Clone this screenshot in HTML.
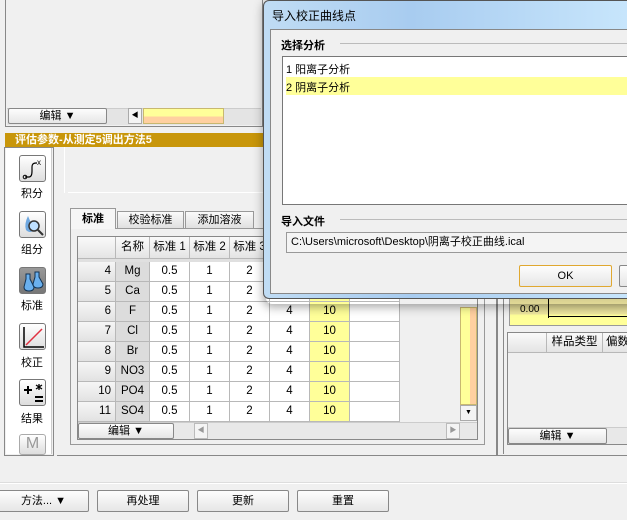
<!DOCTYPE html>
<html><head><meta charset="utf-8">
<style>
*{margin:0;padding:0;box-sizing:border-box}
body{width:627px;height:520px;overflow:hidden;background:#f0f0f0;position:relative;font-family:"Liberation Sans","Noto Sans CJK SC",sans-serif;font-size:11px;color:#000}
.a{position:absolute}
.btn{position:absolute;background:linear-gradient(#fdfdfd,#e6e6e6);border:1px solid #888;border-radius:2px;text-align:center;font-size:11px}
.cell{position:absolute;height:20px;line-height:19px;text-align:center;border-right:1px solid #b8b8b8;border-bottom:1px solid #b8b8b8;background:#fff;font-size:11.5px}
.hd{background:linear-gradient(#fafafa,#e4e4e4)}
.rn{background:linear-gradient(#f6f6f6,#e2e2e2);text-align:right;padding-right:4px}
.nm{background:#dcdcdc}
.yl{background:#ffff99}
.ic{position:absolute;left:19px;width:27px;height:27px;border:1px solid #777;border-radius:3px;background:linear-gradient(#fff,#ddd)}
.lb{position:absolute;left:12px;width:40px;text-align:center;font-size:11px}
</style></head><body>
<div class="a" style="left:5px;top:0;width:258px;height:127px;border:1px solid #888;border-top:none"></div>
<div class="a" style="left:7px;top:108px;width:254px;height:17px;background:#e4e4e4;border-top:1px solid #ccc"></div>
<div class="btn" style="left:8px;top:108px;width:99px;height:16px;line-height:14px">编辑 ▼</div>
<div class="a" style="left:128px;top:108px;width:14px;height:16px;border:1px solid #aaa;background:#f4f4f4;font-size:7px;line-height:14px;text-align:center">◀</div>
<div class="a" style="left:143px;top:108px;width:81px;height:16px;border:1px solid #c8b870;background:linear-gradient(#ffff99 0,#ffff99 55%,#ffd0a0 55%)"></div>
<div class="a" style="left:5px;top:133px;width:260px;height:14px;background:#c8960a;color:#fff;font-weight:bold;font-size:11px;line-height:14px;padding-left:10px">评估参数-从测定5调出方法5</div>
<div class="a" style="left:4px;top:147px;width:50px;height:309px;border:1px solid #888;background:#f0f0f0"></div>
<div class="a" style="left:6px;top:148px;width:46px;height:306px;background:#fff;border-right:1px solid #ccc"></div>
<div class="ic" style="top:155px;font-size:9px"><svg width="27" height="27"><path d="M5 21h4q3 0 3-6v-4q0-4 4-4h1" stroke="#000" fill="none" stroke-width="1.2"/><circle cx="5" cy="21" r="1.8" fill="none" stroke="#000"/><text x="17" y="9" font-size="8" font-family="Liberation Sans">x</text></svg></div>
<div class="lb" style="top:185px">积分</div>
<div class="ic" style="top:211px"><svg width="27" height="27"><path d="M8 4q-4 8 -2 14q4 4 8 0z" fill="#6fa8e0"/><circle cx="14" cy="14" r="5" fill="#bfe0ff" stroke="#333" stroke-width="1.5"/><path d="M18 18l5 5" stroke="#333" stroke-width="2"/></svg></div>
<div class="lb" style="top:241px">组分</div>
<div class="ic" style="top:267px;background:linear-gradient(#999,#777)"><svg width="27" height="27"><path d="M6 6h4v5l4 8q0 4-5 4t-5-4l2-8z" fill="#6ab0ee" stroke="#135"/><path d="M15 4h4v5l4 7q0 4-5 4t-5-4l2-7z" fill="#6ab0ee" stroke="#135"/></svg></div>
<div class="lb" style="top:297px">标准</div>
<div class="ic" style="top:323px"><svg width="27" height="27"><path d="M4 3v20h20" stroke="#000" stroke-width="1.5" fill="none"/><path d="M6 21l16-16" stroke="#e03040" stroke-width="1.5"/></svg></div>
<div class="lb" style="top:354px">校正</div>
<div class="ic" style="top:379px"><svg width="27" height="27"><path d="M4 10h8M8 6v8" stroke="#000" stroke-width="2"/><path d="M15 17h8M15 21h8" stroke="#000" stroke-width="2"/><path d="M19 4v6M16 5l6 4M22 5l-6 4" stroke="#000" stroke-width="1.3"/></svg></div>
<div class="lb" style="top:410px">结果</div>
<div class="ic" style="top:434px;height:21px;border-color:#aaa;color:#999;font-size:16px;text-align:center">M</div>
<div class="a" style="left:57px;top:147px;width:440px;height:309px;border-right:1px solid #888;border-bottom:1px solid #888"></div>
<div class="a" style="left:64px;top:147px;width:1px;height:46px;background:#fff"></div>
<div class="a" style="left:68px;top:192px;width:428px;height:1px;background:#aaa;border-bottom:1px solid #fff"></div>
<div class="a" style="left:70px;top:208px;width:46px;height:21px;background:#f6f6f6;border:1px solid #999;border-bottom:none;font-weight:bold;text-align:center;line-height:20px;z-index:2">标准</div>
<div class="a" style="left:117px;top:211px;width:67px;height:18px;background:linear-gradient(#fafafa,#e0e0e0);border:1px solid #999;text-align:center;line-height:17px">校验标准</div>
<div class="a" style="left:185px;top:211px;width:69px;height:18px;background:linear-gradient(#fafafa,#e0e0e0);border:1px solid #999;text-align:center;line-height:17px">添加溶液</div>
<div class="a" style="left:70px;top:228px;width:415px;height:217px;border:1px solid #999;background:#f0f0f0"></div>
<div class="a" style="left:77px;top:236px;width:401px;height:204px;border:1px solid #888;background:#f0f0f0"></div>
<div class="cell hd" style="left:78px;top:237px;width:38px;height:22px"></div>
<div class="cell hd" style="left:116px;top:237px;width:34px;height:22px;line-height:21px">名称</div>
<div class="cell hd" style="left:150px;top:237px;width:40px;height:22px;line-height:21px">标准 1</div>
<div class="cell hd" style="left:190px;top:237px;width:40px;height:22px;line-height:21px">标准 2</div>
<div class="cell hd" style="left:230px;top:237px;width:40px;height:22px;line-height:21px">标准 3</div>
<div class="a" style="left:78px;top:259px;width:322px;height:3px;background:#e0e0e0"></div>
<div id="rows"></div>
<div class="a" style="left:460px;top:307px;width:17px;height:98px;border:1px solid #c8b870;background:linear-gradient(90deg,#ffff99 60%,#ffd0a0 60%)"></div>
<div class="a" style="left:460px;top:405px;width:17px;height:16px;border:1px solid #aaa;background:#f4f4f4;font-size:7px;text-align:center;line-height:14px">▼</div>
<div class="a" style="left:78px;top:422px;width:399px;height:17px;background:#e8e8e8;border-top:1px solid #ccc"></div>
<div class="btn" style="left:78px;top:423px;width:96px;height:16px;line-height:14px">编辑 ▼</div>
<div class="a" style="left:194px;top:423px;width:14px;height:16px;border:1px solid #bbb;background:#f4f4f4;font-size:7px;color:#999;line-height:14px;text-align:center">◀</div>
<div class="a" style="left:446px;top:423px;width:14px;height:16px;border:1px solid #bbb;background:#f4f4f4;font-size:7px;color:#999;line-height:14px;text-align:center">▶</div>
<div class="a" style="left:497px;top:296px;width:140px;height:160px;border:1px solid #888;border-top:none"></div>
<div class="a" style="left:503px;top:296px;width:130px;height:158px;border-left:1px solid #888"></div>
<div class="a" style="left:509px;top:298px;width:130px;height:28px;background:linear-gradient(#d8d090 0,#f0e8a0 60%,#ffff99 60%);border:1px solid #999"></div>
<div class="a" style="left:520px;top:304px;font-size:10px">0.00</div>
<div class="a" style="left:548px;top:298px;width:1px;height:20px;background:#000"></div>
<div class="a" style="left:548px;top:316px;width:80px;height:1px;background:#000"></div>
<div class="a" style="left:507px;top:332px;width:130px;height:113px;border:1px solid #888;background:#f0f0f0"></div>
<div class="cell hd" style="left:508px;top:333px;width:39px"></div>
<div class="cell hd" style="left:547px;top:333px;width:56px">样品类型</div>
<div class="cell hd" style="left:603px;top:333px;width:40px;text-align:left;padding-left:3px">偏数</div>
<div class="a" style="left:508px;top:427px;width:120px;height:17px;background:#e8e8e8;border-top:1px solid #ccc"></div>
<div class="btn" style="left:508px;top:428px;width:99px;height:16px;line-height:14px">编辑 ▼</div>
<div class="a" style="left:0;top:482px;width:627px;height:2px;background:#fff;border-top:1px solid #ddd"></div>
<div class="btn" style="left:-2px;top:490px;width:91px;height:22px;line-height:20px">方法... ▼</div>
<div class="btn" style="left:97px;top:490px;width:92px;height:22px;line-height:20px">再处理</div>
<div class="btn" style="left:197px;top:490px;width:92px;height:22px;line-height:20px">更新</div>
<div class="btn" style="left:297px;top:490px;width:92px;height:22px;line-height:20px">重置</div>
<div class="a" style="left:266px;top:4px;width:370px;height:300px;box-shadow:0 0 10px 3px rgba(0,0,0,.35);border-radius:6px"></div>
<div class="a" style="left:263px;top:0;width:370px;height:299px;background:linear-gradient(90deg,#c0dcf4,#a8ccf0 40%,#c8e6fc);border:1px solid #555;border-radius:6px"></div>
<div class="a" style="left:272px;top:7px;font-size:12px">导入校正曲线点</div>
<div class="a" style="left:270px;top:29px;width:360px;height:265px;background:#f0f0f0;border:1px solid #888"></div>
<div class="a" style="left:281px;top:37px;font-weight:bold">选择分析</div>
<div class="a" style="left:340px;top:43px;width:290px;height:1px;background:#bbb"></div>
<div class="a" style="left:282px;top:56px;width:350px;height:149px;background:#fff;border:1px solid #777"></div>
<div class="a" style="left:286px;top:61px;font-size:11px">1 阳离子分析</div>
<div class="a" style="left:286px;top:77px;width:345px;height:18px;background:#ffff99"></div>
<div class="a" style="left:286px;top:79px;font-size:11px">2 阴离子分析</div>
<div class="a" style="left:281px;top:213px;font-weight:bold">导入文件</div>
<div class="a" style="left:340px;top:219px;width:290px;height:1px;background:#bbb"></div>
<div class="a" style="left:286px;top:232px;width:345px;height:21px;background:#f4f4f4;border:1px solid #999;padding-left:4px;line-height:19px;font-size:11px">C:\Users\microsoft\Desktop\阴离子校正曲线.ical</div>
<div class="btn" style="left:519px;top:265px;width:93px;height:22px;line-height:20px;border-color:#e0a830">OK</div>
<div class="btn" style="left:619px;top:265px;width:20px;height:22px"></div>
<script>
var d=[[4,'Mg'],[5,'Ca'],[6,'F'],[7,'Cl'],[8,'Br'],[9,'NO3'],[10,'PO4'],[11,'SO4']],h='';
d.forEach(function(r,i){var y=262+i*20;
h+='<div class="cell rn" style="left:78px;top:'+y+'px;width:38px">'+r[0]+'</div>';
h+='<div class="cell nm" style="left:116px;top:'+y+'px;width:34px">'+r[1]+'</div>';
[['0.5',150],['1',190],['2',230],['4',270]].forEach(function(c){h+='<div class="cell" style="left:'+c[1]+'px;top:'+y+'px;width:40px">'+c[0]+'</div>'});
h+='<div class="cell yl" style="left:310px;top:'+y+'px;width:40px">10</div>';
h+='<div class="cell" style="left:350px;top:'+y+'px;width:50px"></div>';});
document.getElementById('rows').innerHTML=h;
</script>
</body></html>
